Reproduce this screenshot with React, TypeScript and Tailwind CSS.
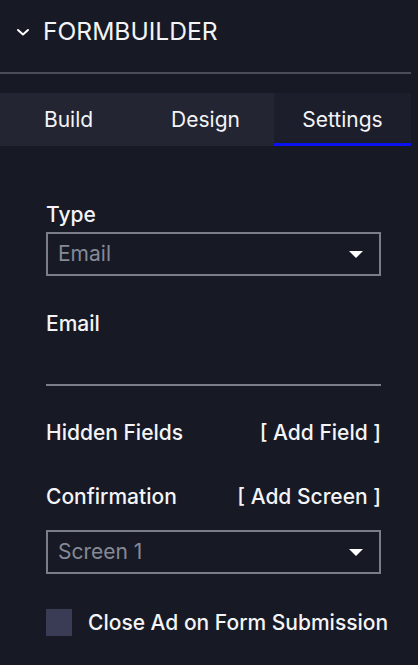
import { useState } from 'react';

const tabs = ['Build', 'Design', 'Settings'];

function Caret() {
  return (
    <svg width="16" height="9" viewBox="0 0 16 9" className="shrink-0">
      <path d="M1 1h14L8 8z" fill="#ffffff" />
    </svg>
  );
}

function SelectBox({ value }: { value: string }) {
  return (
    <div className="flex h-[44px] w-full items-center justify-between border-2 border-[#7b7e8a] pl-[10px] pr-[15px]">
      <span className="text-[21px] text-[#868996]">{value}</span>
      <Caret />
    </div>
  );
}

export default function App() {
  const [active, setActive] = useState('Settings');
  const [closeAd, setCloseAd] = useState(false);

  return (
    <div
      className="min-h-[665px] w-[418px] bg-[#171a25] text-[#f4f4f6]"
      style={{ fontFamily: 'Inter, "Noto Sans", sans-serif' }}
    >
      <div className="flex h-[62px] items-center pl-[15px]">
        <svg width="16" height="14" viewBox="0 0 16 14" className="mt-[1px]">
          <path d="M3 5l5 4.5 5-4.5" stroke="#ffffff" strokeWidth="2" fill="none" strokeLinecap="round" strokeLinejoin="round" />
        </svg>
        <h1 className="ml-[12px] text-[24.6px] font-normal leading-none">FORMBUILDER</h1>
      </div>
      <div className="mt-[10px] h-[2px] w-[411px] bg-[#4b4d58]" />

      <div className="mt-[19px] flex h-[53px] w-[411px] bg-[#232533]">
        {tabs.map((t) => (
          <button
            key={t}
            type="button"
            onClick={() => setActive(t)}
            className={
              active === t
                ? 'flex flex-1 items-center justify-center border-b-[3px] border-[#0a12f0] bg-[#1c1e2b] pt-[3px] text-[21px]'
                : 'flex flex-1 items-center justify-center text-[21px]'
            }
          >
            {t}
          </button>
        ))}
      </div>

      <div className="ml-[46px] w-[335px] pt-[57px]">
        <label className="block text-[21px] font-medium leading-[24px]">Type</label>
        <div className="mt-[5px]">
          <SelectBox value="Email" />
        </div>

        <label className="mt-[36px] block text-[21px] font-medium leading-[24px]">Email</label>
        <input className="block h-[50px] w-full border-b-2 border-[#7b7e8a] bg-transparent text-[21px] outline-none" />

        <div className="mt-[35px] flex items-center justify-between text-[21px] font-medium leading-[24px]">
          <span>Hidden Fields</span>
          <button type="button">[ Add Field ]</button>
        </div>

        <div className="mt-[40px] flex items-center justify-between text-[21px] font-medium leading-[24px]">
          <span>Confirmation</span>
          <button type="button">[ Add Screen ]</button>
        </div>
        <div className="mt-[21px]">
          <SelectBox value="Screen 1" />
        </div>

        <label className="mt-[33px] flex items-center">
          <button
            type="button"
            onClick={() => setCloseAd(!closeAd)}
            className="h-[27px] w-[26px] shrink-0 bg-[#3a3c55]"
          />
          <span className="ml-[16px] whitespace-nowrap text-[21px] font-medium">Close Ad on Form Submission</span>
        </label>
      </div>
    </div>
  );
}
